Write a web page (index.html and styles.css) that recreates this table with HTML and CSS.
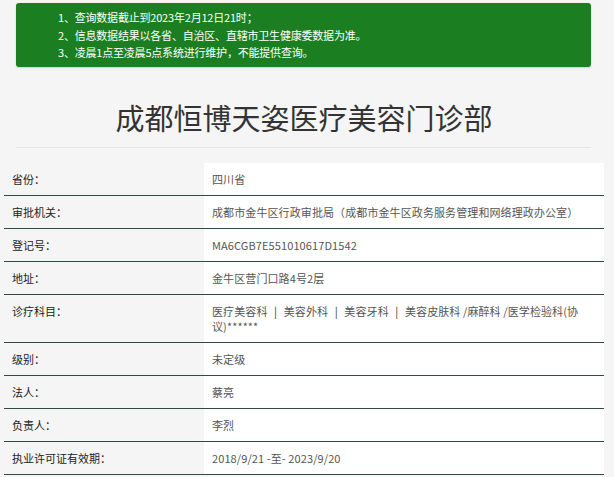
FILE: index.html
```html
<!DOCTYPE html>
<html lang="zh-CN">
<head>
<meta charset="utf-8">
<title>成都恒博天姿医疗美容门诊部</title>
<link rel="stylesheet" href="styles.css">
</head>
<body>
<div class="notice">
  <p>1、查询数据截止到2023年2月12日21时；</p>
  <p>2、信息数据结果以各省、自治区、直辖市卫生健康委数据为准。</p>
  <p>3、凌晨1点至凌晨5点系统进行维护，不能提供查询。</p>
</div>
<h1 class="title">成都恒博天姿医疗美容门诊部</h1>
<hr class="divider">
<div class="info">
  <div class="row"><div class="label">省份：</div><div class="value">四川省</div></div>
  <div class="row"><div class="label">审批机关：</div><div class="value">成都市金牛区行政审批局（成都市金牛区政务服务管理和网络理政办公室）</div></div>
  <div class="row"><div class="label">登记号：</div><div class="value">MA6CGB7E551010617D1542</div></div>
  <div class="row"><div class="label">地址：</div><div class="value">金牛区营门口路4号2层</div></div>
  <div class="row"><div class="label">诊疗科目：</div><div class="value">医疗美容科 <span class="sep">|</span> 美容外科 <span class="sep">|</span> 美容牙科 <span class="sep">|</span> 美容皮肤科 /麻醉科 /医学检验科(协<br>议)******</div></div>
  <div class="row"><div class="label">级别：</div><div class="value">未定级</div></div>
  <div class="row"><div class="label">法人：</div><div class="value">蔡亮</div></div>
  <div class="row"><div class="label">负责人：</div><div class="value">李烈</div></div>
  <div class="row"><div class="label">执业许可证有效期：</div><div class="value">2018/9/21 -至- 2023/9/20</div></div>
</div>
</body>
</html>
```
FILE: styles.css
```css
html, body {
  margin: 0;
  padding: 0;
  background: #f5f5f5;
  font-family: "Noto Sans CJK SC", "Microsoft YaHei", sans-serif;
  color: #333;
}
.notice {
  margin: 3px 23px 0 16px;
  padding: 6px 0 5px 42px;
  background: #1b7f21;
  border-radius: 3px;
  box-shadow: 0 1px 2px rgba(0,0,0,0.15);
  color: #fff;
}
.notice p {
  margin: 0;
  font-size: 11px;
  line-height: 17.5px;
  letter-spacing: -0.2px;
}
.title {
  margin: 30px 0 0 0;
  text-align: center;
  font-size: 29px;
  font-weight: normal;
  line-height: 40px;
  color: #333;
  padding-right: 6px;
}
.divider {
  margin: 10px 23px 0 16px;
  border: 0;
  border-top: 1px solid #e6e6e6;
  height: 0;
}
.info {
  margin: 15px 10px 0 4px;
}
.row {
  display: grid;
  grid-template-columns: 200px 1fr;
  border-bottom: 1px solid #2f4c40;
}
.label, .value {
  padding: 9px 8px 8px 8px;
  font-size: 11px;
  line-height: 15px;
}
.label {
  font-weight: normal;
  color: #222;
}
.value {
  background: #fff;
  color: #555;
  letter-spacing: 0.1px;
}
.sep {
  padding: 0 4px;
  color: #333;
}
```
